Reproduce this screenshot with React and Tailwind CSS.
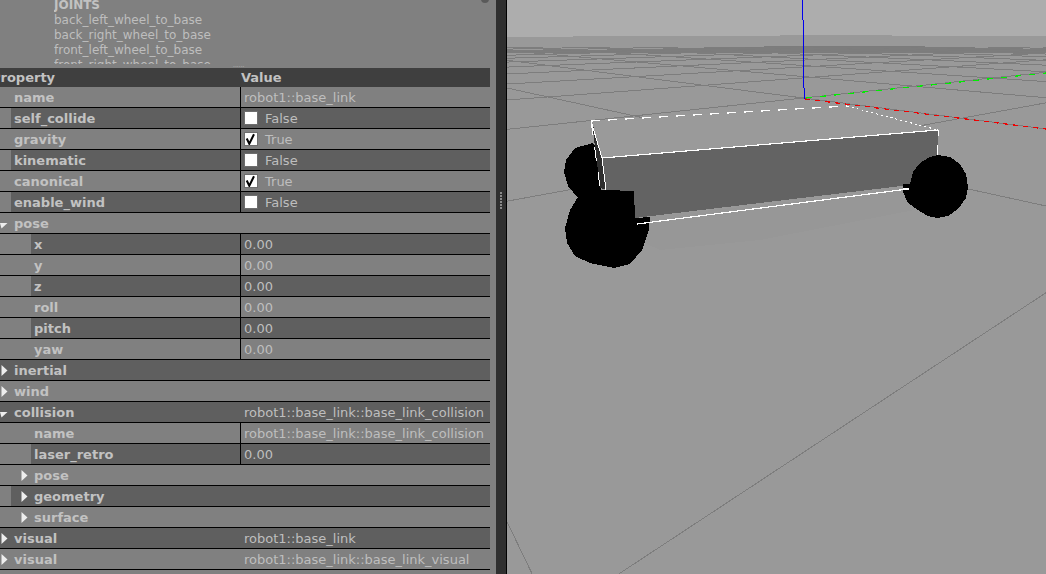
const rows = [
  { label: 'name', value: 'robot1::base_link', tint: 'w-0', split: true, indent: 'pl-[14px]' },
  { label: 'self_collide', check: false, value: 'False', tint: 'w-[11px]', split: true, indent: 'pl-[3px]' },
  { label: 'gravity', check: true, value: 'True', tint: 'w-[11px]', split: true, indent: 'pl-[3px]' },
  { label: 'kinematic', check: false, value: 'False', tint: 'w-[11px]', split: true, indent: 'pl-[3px]' },
  { label: 'canonical', check: true, value: 'True', tint: 'w-[11px]', split: true, indent: 'pl-[3px]' },
  { label: 'enable_wind', check: false, value: 'False', tint: 'w-[11px]', split: true, indent: 'pl-[3px]' },
  { label: 'pose', arrow: 'down', tint: 'w-0', indent: 'pl-[14px]' },
  { label: 'x', value: '0.00', tint: 'w-[31px]', split: true, indent: 'pl-[3px]' },
  { label: 'y', value: '0.00', tint: 'w-[31px]', split: true, indent: 'pl-[3px]' },
  { label: 'z', value: '0.00', tint: 'w-[31px]', split: true, indent: 'pl-[3px]' },
  { label: 'roll', value: '0.00', tint: 'w-[31px]', split: true, indent: 'pl-[3px]' },
  { label: 'pitch', value: '0.00', tint: 'w-[31px]', split: true, indent: 'pl-[3px]' },
  { label: 'yaw', value: '0.00', tint: 'w-[31px]', split: true, indent: 'pl-[3px]' },
  { label: 'inertial', arrow: 'right', tint: 'w-0', indent: 'pl-[14px]' },
  { label: 'wind', arrow: 'right', tint: 'w-0', indent: 'pl-[14px]' },
  { label: 'collision', arrow: 'down', value: 'robot1::base_link::base_link_collision', tint: 'w-0', indent: 'pl-[14px]' },
  { label: 'name', value: 'robot1::base_link::base_link_collision', tint: 'w-[31px]', split: true, indent: 'pl-[3px]' },
  { label: 'laser_retro', value: '0.00', tint: 'w-[31px]', split: true, indent: 'pl-[3px]' },
  { label: 'pose', arrow: 'nested', tint: 'w-[11px]', indent: 'pl-[23px]' },
  { label: 'geometry', arrow: 'nested', tint: 'w-[11px]', indent: 'pl-[23px]' },
  { label: 'surface', arrow: 'nested', tint: 'w-[11px]', indent: 'pl-[23px]' },
  { label: 'visual', arrow: 'right', value: 'robot1::base_link', tint: 'w-0', indent: 'pl-[14px]' },
  { label: 'visual', arrow: 'right', value: 'robot1::base_link::base_link_visual', tint: 'w-0', indent: 'pl-[14px]' },
];

const joints = ['back_left_wheel_to_base', 'back_right_wheel_to_base', 'front_left_wheel_to_base', 'front_right_wheel_to_base'];

function Arrow({ kind }) {
  if (kind === 'down') {
    return (
      <svg className="absolute left-0 top-[9px]" width="8" height="7" viewBox="0 0 8 7">
        <polygon points="0,1 7.5,1 1.5,6.5" fill="#eee" />
      </svg>
    );
  }
  return (
    <svg className={`absolute top-[5px] ${kind === 'nested' ? 'left-[21px]' : 'left-[1px]'}`} width="7" height="11" viewBox="0 0 7 11">
      <polygon points="0.5,0 6.5,5.5 0.5,11" fill="#eee" />
    </svg>
  );
}

function Check({ on }) {
  return (
    <span className="mr-[7px] flex h-[14px] w-[14px] items-center justify-center border border-[#6e6e6e] bg-white">
      {on && (
        <svg width="12" height="12" viewBox="0 0 12 12">
          <path d="M1.7 5.5 L4.3 10.8 L9 1.3" fill="none" stroke="#000" strokeWidth="2" />
        </svg>
      )}
    </span>
  );
}

function Row({ row, dark }) {
  const shade = dark ? 'bg-[#5f5f5f]' : 'bg-[#808080]';
  return (
    <div className="relative flex h-[21px] border-b border-black">
      <div className={`${row.tint} shrink-0`} />
      <div className={`flex min-w-0 flex-1 ${shade}`}>
        <div className={`flex min-w-0 flex-1 items-center ${row.indent} font-bold text-[#c2c2c2]`}>{row.label}</div>
        <div className={`flex w-[250px] shrink-0 items-center border-l pl-[3px] text-[#bebebe] ${row.split ? 'border-black' : 'border-transparent'}`}>
          {row.check !== undefined && <Check on={row.check} />}
          <span>{row.value}</span>
        </div>
      </div>
      {row.arrow && <Arrow kind={row.arrow} />}
    </div>
  );
}

// vanishing points of the ground grid, measured from the picture
const vpRed = [270, 30];
const vpGreen = [1445, 30];
const origin = [803, 98];
const floorTop = 47;

function gridLines() {
  const lines = [[507, 88, 1046, 206]];
  // lines that run along the red axis
  for (let k = -2; k < 150; k++) {
    if (k === -1) continue;
    const d = 1 / (0.001558 + 0.000332 * k);
    const x = vpGreen[0] - d;
    const y = origin[1] - 0.103 * (x - origin[0]);
    const slope = (y - vpRed[1]) / (x - vpRed[0]);
    const startX = Math.max(507, vpRed[0] + (floorTop - vpRed[1]) / slope);
    lines.push([startX, vpRed[1] + slope * (startX - vpRed[0]), 1046, vpRed[1] + slope * (1046 - vpRed[0])]);
  }
  // lines that run along the green axis
  for (let k = -2; k < 150; k++) {
    const d = 1 / (0.001876 + 0.00043 * k);
    const x = vpRed[0] + d;
    const y = origin[1] + 0.1276 * (x - origin[0]);
    const slope = (vpGreen[1] - y) / (vpGreen[0] - x);
    const endX = Math.min(1046, vpGreen[0] + (floorTop - vpGreen[1]) / slope);
    lines.push([507, y + slope * (507 - x), endX, y + slope * (endX - x)]);
  }
  return lines;
}

function Viewport() {
  return (
    <svg className="block h-[574px] flex-1" viewBox="507 0 539 574" shapeRendering="crispEdges">
      <rect x="507" y="0" width="539" height="574" fill="#999999" />
      <polygon points="507,0 1046,0 1046,36 892,36 892,35 780,35 780,36 573,36 573,37 507,37" fill="#adadad" />
      <polygon points="507,51 640,49 690,48 790,46 900,46 1000,48 1046,49 1046,53 507,53" fill="#7c7c7c" />
      <polygon points="600,222 900,190 940,205 760,240 660,250" fill="#979797" />
      <g stroke="#7d7d7d" strokeWidth="1">
        {gridLines().map(([x1, y1, x2, y2], i) => (
          <line key={i} x1={x1} y1={y1} x2={x2} y2={y2} />
        ))}
      </g>

      {/* axes */}
      <path d="M802.5 0V20M803.5 20V88M804.5 88V99" stroke="#0000ee" strokeWidth="1" fill="none" />
      <line x1="806" y1="98" x2="1046" y2="73" stroke="#00ee00" strokeWidth="1.2" strokeDasharray="6 8" />
      <line x1="805" y1="99" x2="1046" y2="129" stroke="#ee0000" strokeWidth="1.2" strokeDasharray="5 5" />

      {/* rear wheel, left */}
      <polygon points="593,143 575,148 566,160 564,172 568,186 578,198 600,200 605,160" fill="#000" />

      {/* body */}
      <polygon points="591,121 850,105 938,130 602,158" fill="#9a9a9a" />
      <polygon points="602,158 938,130 938,160 910,185 635,218 606,190" fill="#636363" />
      <polygon points="592,122 602,158 606,190 600,188" fill="#2e2e2e" />

      {/* front wheel, left */}
      <polygon points="578,197 570,210 565,228 567,243 575,256 590,263 614,268 630,264 642,250 649,230 650,217 635,218 634,191 605,190 595,189" fill="#000" />
      {/* wheel, right */}
      <polygon points="938,155 950,157 960,164 966,174 968,187 966,198 958,209 948,216 937,218 928,216 918,210 908,203 903,192 903,184 910,184 913,172 920,163 930,157" fill="#000" />

      {/* selection box */}
      <g stroke="#fff" strokeWidth="1.2" fill="none">
        <line x1="602" y1="158" x2="938" y2="130" />
        <line x1="637" y1="224" x2="908" y2="189" />
        <line x1="591" y1="121" x2="602" y2="158" strokeWidth="1" />
        <line x1="602" y1="158" x2="606" y2="190" strokeWidth="1" />
        <line x1="591" y1="121" x2="600" y2="187" strokeWidth="1" strokeDasharray="14 12" />
        <line x1="591" y1="121" x2="847" y2="106" strokeDasharray="9 8" />
        <line x1="847" y1="106" x2="938" y2="130" strokeWidth="1" strokeDasharray="2 3" />
        <path d="M938.5 130V136M937.5 145V155" />
        <line x1="903" y1="189" x2="909" y2="189" />
      </g>
    </svg>
  );
}

export default function App() {
  return (
    <div className="flex h-[574px] w-[1046px] overflow-hidden bg-[#808080] font-['DejaVu_Sans',sans-serif] text-[13px] leading-[15px]">
      <div className="relative flex w-[496px] shrink-0 flex-col overflow-hidden">
        <div className="h-[68px] shrink-0 pl-[54px]">
          <div className="relative h-[64px] overflow-hidden text-[#bebebe]">
            <div className="-mt-[2px] text-[12px] font-bold text-[#c2c2c2]">JOINTS</div>
            {joints.map((name) => (
              <div key={name} className="text-[12px]">{name}</div>
            ))}
          </div>
        </div>
        <div className="absolute left-[233px] top-[63px] text-[6px] leading-[4px] text-[#bdbdbd]">......</div>
        <div className="absolute left-[481px] top-[-5px] h-[8px] w-[8px] rounded-full bg-[#5a5a5a]" />

        <div className="w-[490px]">
          <div className="flex h-[19px] items-center overflow-hidden bg-[#3f3f3f] font-bold text-[#c2c2c2]">
            <div className="-ml-[9px] w-[250px] shrink-0">Property</div>
            <div>Value</div>
          </div>
          {rows.map((row, i) => (
            <Row key={i} row={row} dark={i % 2 === 1} />
          ))}
        </div>
      </div>

      <div className="flex w-[10px] shrink-0 flex-col items-center gap-px bg-[#2f2f2f] pt-[192px]">
        {[0, 1, 2, 3, 4, 5].map((dot) => (
          <div key={dot} className="h-[2px] w-[2px] bg-[#8a8a8a]" />
        ))}
      </div>
      <div className="w-px shrink-0 bg-black" />
      <Viewport />
    </div>
  );
}
